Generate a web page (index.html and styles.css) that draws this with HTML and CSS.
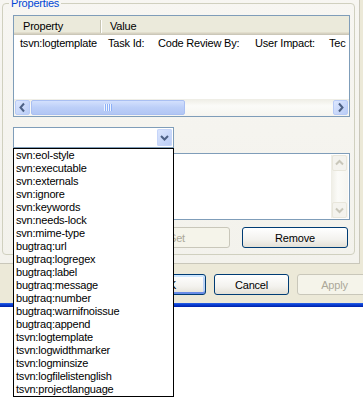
FILE: index.html
```html
<!DOCTYPE html>
<html lang="en">
<head>
    <meta charset="UTF-8">
    <meta name="viewport" content="width=device-width, initial-scale=1.0">
    <title>Properties</title>
    <link rel="stylesheet" href="styles.css">
</head>
<body>

    <!-- Dialog window (cropped) -->
    <div class="dialog">
        <div class="tab-page">
            <fieldset class="group">
                <legend>Properties</legend>

                <!-- Property list view -->
                <div class="list">
                    <div class="list-header">
                        <div class="hcell hcell-name">Property</div>
                        <div class="hdivider"></div>
                        <div class="hcell">Value</div>
                    </div>
                    <div class="list-rows">
                        <div class="row">
                            <div class="cell-name">tsvn:logtemplate</div>
                            <div class="cell-value"><span class="v1">Task Id:</span><span class="v2">Code Review By:</span><span class="v3">User Impact:</span><span>Tec</span></div>
                        </div>
                    </div>
                    <div class="hscroll">
                        <div class="sbtn">
                            <svg width="15" height="15" viewBox="0 0 15 15"><polyline points="9,3.5 5.5,7.5 9,11.5" fill="none" stroke="#4d6185" stroke-width="2"/></svg>
                        </div>
                        <div class="thumb">
                            <svg width="8" height="7" viewBox="0 0 8 7"><rect x="0" y="0" width="1" height="7" fill="#eef4fe"/><rect x="1" y="0" width="1" height="7" fill="#8cb0f8"/><rect x="2" y="0" width="1" height="7" fill="#eef4fe"/><rect x="3" y="0" width="1" height="7" fill="#8cb0f8"/><rect x="4" y="0" width="1" height="7" fill="#eef4fe"/><rect x="5" y="0" width="1" height="7" fill="#8cb0f8"/><rect x="6" y="0" width="1" height="7" fill="#eef4fe"/><rect x="7" y="0" width="1" height="7" fill="#8cb0f8"/></svg>
                        </div>
                        <div class="sbtn sbtn-right">
                            <svg width="15" height="15" viewBox="0 0 15 15"><polyline points="6,3.5 9.5,7.5 6,11.5" fill="none" stroke="#4d6185" stroke-width="2"/></svg>
                        </div>
                    </div>
                </div>

                <!-- Property name combo, dropped down -->
                <div class="combo-row">
                    <div class="combo">
                        <div class="combo-btn">
                            <svg width="15" height="17" viewBox="0 0 15 17"><polyline points="4,7 7.5,10.5 11,7" fill="none" stroke="#4d6185" stroke-width="2"/></svg>
                        </div>
                    </div>
                    <ul class="dropdown">
                        <li>svn:eol-style</li>
                        <li>svn:executable</li>
                        <li>svn:externals</li>
                        <li>svn:ignore</li>
                        <li>svn:keywords</li>
                        <li>svn:needs-lock</li>
                        <li>svn:mime-type</li>
                        <li>bugtraq:url</li>
                        <li>bugtraq:logregex</li>
                        <li>bugtraq:label</li>
                        <li>bugtraq:message</li>
                        <li>bugtraq:number</li>
                        <li>bugtraq:warnifnoissue</li>
                        <li>bugtraq:append</li>
                        <li>tsvn:logtemplate</li>
                        <li>tsvn:logwidthmarker</li>
                        <li>tsvn:logminsize</li>
                        <li>tsvn:logfilelistenglish</li>
                        <li>tsvn:projectlanguage</li>
                    </ul>
                </div>

                <!-- Property value edit -->
                <div class="value-box">
                    <div class="vscroll">
                        <div class="sbtn-off">
                            <svg width="15" height="16" viewBox="0 0 15 16"><polyline points="4,9.5 7.5,6 11,9.5" fill="none" stroke="#c9c7ba" stroke-width="2"/></svg>
                        </div>
                        <div class="sbtn-off">
                            <svg width="15" height="16" viewBox="0 0 15 16"><polyline points="4,6.5 7.5,10 11,6.5" fill="none" stroke="#c9c7ba" stroke-width="2"/></svg>
                        </div>
                    </div>
                </div>

                <div class="btn-row">
                    <button class="btn" disabled>Set</button>
                    <button class="btn">Remove</button>
                </div>
            </fieldset>
        </div>

        <div class="dialog-buttons">
            <button class="btn btn-default">OK</button>
            <button class="btn">Cancel</button>
            <button class="btn" disabled>Apply</button>
        </div>
    </div>
    <div class="frame-bottom"></div>

</body>
</html>
```

FILE: styles.css
```css
/* Base: XP-ish dialog font */
html, body {
    margin: 0;
    height: 398px;
    background: #fff;
}

body {
    font-family: "Liberation Sans", Arial, sans-serif;
    font-size: 11px;
    letter-spacing: -0.2px;
    color: #000;
}

.dialog {
    display: flow-root;
    background: #ece9d8;
    height: 303px;
}

/* Tab page body */
.tab-page {
    margin: -3px 3px 0 -1px;
    padding: 0 4px 8px 3px;
    background: linear-gradient(#f7f6f2, #f3f2ec);
    border-right: 1px solid #c9c7ba;
    border-bottom: 1px solid #c9c7ba;
}

/* Group box */
.group {
    margin: 0;
    min-width: 0;
    padding: 5px 4px 6px 10px;
    border: 1px solid #d0d0bf;
    border-radius: 4px;
}

.group legend {
    margin-left: -4px;
    padding: 0 2px;
    line-height: 13px;
    color: #0046d5;
}

/* List view */
.list {
    height: 100px;
    border: 1px solid #7f9db9;
    background: #fff;
    display: flex;
    flex-direction: column;
    overflow: hidden;
}

.list-header {
    height: 19px;
    padding-top: 2px;
    box-sizing: border-box;
    display: flex;
    align-items: center;
    flex: none;
    background: linear-gradient(#ebeadb 0, #ebeadb 16px, #e2decd 16px, #e2decd 17px, #d6d2c2 17px, #d6d2c2 18px, #cbc7b8 18px);
}

.hcell {
    padding-left: 9px;
    line-height: 13px;
    white-space: nowrap;
}

.hcell-name {
    width: 86px;
    box-sizing: border-box;
}

.hdivider {
    width: 1px;
    height: 13px;
    background: #c7c5b2;
    box-shadow: 1px 0 #fff;
}

.list-rows {
    height: 64px;
    padding-top: 1px;
    box-sizing: border-box;
    flex: none;
    overflow: hidden;
}

.row {
    display: flex;
    line-height: 15px;
    white-space: nowrap;
}

.cell-name {
    width: 87px;
    padding-left: 6px;
    box-sizing: border-box;
    flex: none;
}

.cell-value {
    padding-left: 7px;
}

.cell-value span { display: inline-block; }
.cell-value .v1 { width: 50px; }
.cell-value .v2 { width: 97px; }
.cell-value .v3 { width: 74px; }

/* Horizontal scroll bar */
.hscroll {
    height: 17px;
    flex: none;
    display: flex;
    padding: 1px;
    box-sizing: border-box;
    background: linear-gradient(#eeede5, #fbfbf8 40%, #f6f5f0);
}

.sbtn {
    width: 15px;
    height: 15px;
    box-sizing: border-box;
    border: 1px solid #b8cbf6;
    border-radius: 2px;
    background: linear-gradient(135deg, #dde7fe, #b9ccf6);
    display: flex;
}

.sbtn svg { margin: -1px; }

.sbtn-right { margin-left: auto; }

.thumb {
    width: 154px;
    margin-left: 1px;
    box-sizing: border-box;
    border: 1px solid #a9bff2;
    border-radius: 2px;
    background: linear-gradient(#d3e0fd, #bccff8 50%, #b2c6f4);
    display: flex;
    align-items: center;
    justify-content: center;
}

/* Combo box with open list */
.combo-row {
    margin-top: 10px;
    position: relative;
    z-index: 10;
}

.combo {
    width: 161px;
    height: 21px;
    box-sizing: border-box;
    border: 1px solid #7f9db9;
    background: #fff;
    padding: 1px;
    display: flex;
    justify-content: flex-end;
}

.combo-btn {
    width: 15px;
    height: 17px;
    border-radius: 2px;
    background: linear-gradient(135deg, #dde7fe, #b9ccf6);
    box-shadow: inset 0 0 0 1px #c6d5f9;
}

.dropdown {
    position: absolute;
    left: 0;
    top: 21px;
    width: 161px;
    box-sizing: border-box;
    margin: 0;
    padding: 0;
    list-style: none;
    border: 1px solid #000;
    background: #fff;
}

.dropdown li {
    height: 13px;
    line-height: 13px;
    padding: 0 2px;
    white-space: nowrap;
}

/* Value edit box */
.value-box {
    margin-top: 5px;
    height: 67px;
    box-sizing: border-box;
    border: 1px solid #7f9db9;
    background: #fff;
    padding: 1px;
    display: flex;
    justify-content: flex-end;
}

.vscroll {
    width: 17px;
    display: flex;
    flex-direction: column;
    justify-content: space-between;
    align-items: center;
    background: linear-gradient(90deg, #eeede5, #fbfbf8 40%, #f6f5f0);
}

.sbtn-off {
    width: 15px;
    height: 16px;
    box-sizing: border-box;
    border: 1px solid #e8e6db;
    border-radius: 2px;
    background: #f4f3ee;
    display: flex;
}

.sbtn-off svg { margin: -1px; }

/* Buttons */
.btn-row {
    margin-top: 7px;
    padding-right: 2px;
    display: flex;
    justify-content: flex-end;
    gap: 12px;
}

.btn {
    height: 21px;
    width: 106px;
    box-sizing: border-box;
    border: 1px solid #003c74;
    border-radius: 3px;
    background: linear-gradient(#ffffff, #f3f2ee 60%, #e3e0d6);
    font-family: inherit;
    font-size: 11px;
    letter-spacing: -0.2px;
    color: #000;
    padding: 0;
}

.btn:disabled {
    border-color: #c9c7ba;
    background: #f5f4ea;
    color: #aca899;
}

.dialog-buttons {
    margin-top: 10px;
    padding-left: 131px;
    display: flex;
    gap: 8px;
}

.dialog-buttons .btn {
    width: 75px;
    flex: none;
}

.btn-default {
    box-shadow: inset 0 2px #cee7ff, inset 0 -2px #698ce6, inset 2px 0 #bcd4f6, inset -2px 0 #bcd4f6;
}

/* Window frame bottom edge */
.frame-bottom {
    height: 4px;
    background: linear-gradient(#2c63e6, #0a3fd4 40%, #0021a8);
}
```
